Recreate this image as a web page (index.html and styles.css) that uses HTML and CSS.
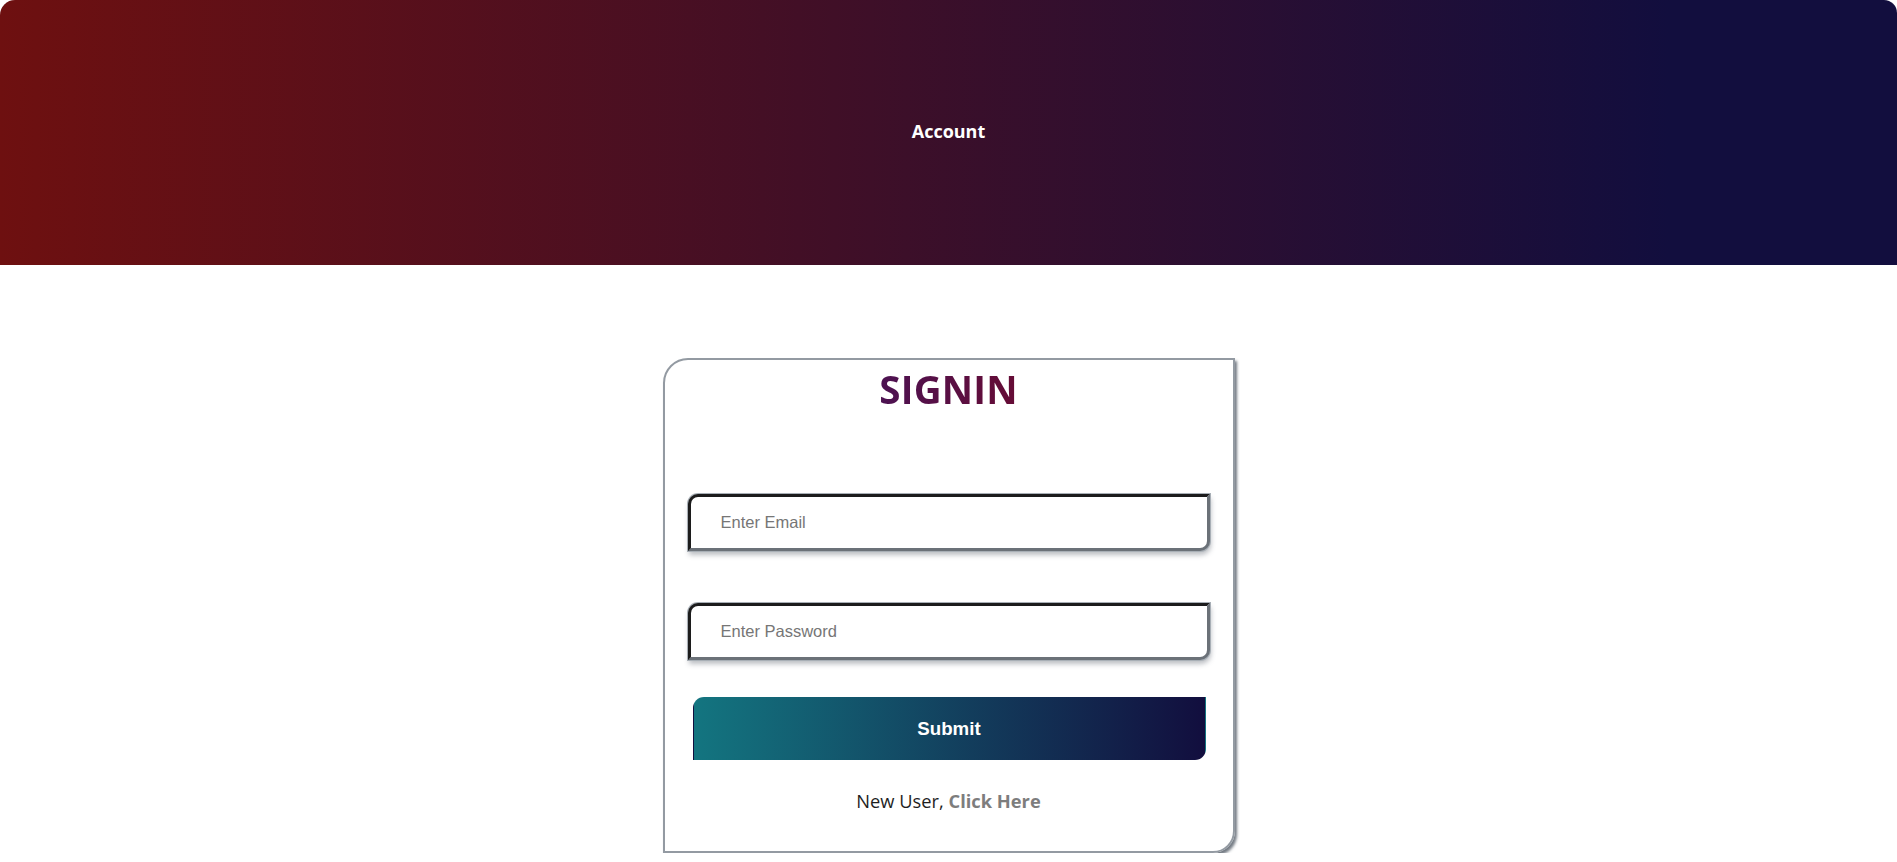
FILE: index.html
```html
<!DOCTYPE html>
<html lang="en">
<head>
<meta charset="utf-8">
<title>Account</title>
<link rel="stylesheet" href="styles.css">
</head>
<body>
<header class="banner">
  <span class="banner-title">Account</span>
</header>
<main class="page">
  <form class="card" onsubmit="return false">
    <h1 class="card-title">SIGNIN</h1>
    <input class="field field-email" type="email" placeholder="Enter Email">
    <input class="field field-password" type="password" placeholder="Enter Password">
    <button class="submit" type="submit">Submit</button>
    <p class="switch">New User, <a class="switch-link" href="#">Click Here</a></p>
  </form>
</main>
</body>
</html>
```

FILE: styles.css
```css
html, body {
  margin: 0;
  padding: 0;
  background: #ffffff;
}

body {
  font-family: "Open Sans", "Noto Sans", sans-serif;
}

.banner {
  height: 265px;
  box-sizing: border-box;
  padding-bottom: 3px;
  display: flex;
  align-items: center;
  justify-content: center;
  background: linear-gradient(to right, #6e1010 0%, #120e3e 88%, #120e3e 100%);
  border-radius: 15px 13px 0 0;
}

.banner-title {
  color: #ffffff;
  font-weight: 700;
  font-size: 18px;
}

.page {
  display: flex;
  justify-content: center;
  padding-top: 93px;
}

.card {
  width: 568px;
  box-sizing: content-box;
  border: 2px solid #939aa2;
  border-radius: 25px 0 22px 0;
  box-shadow: 2px 3px 3px rgba(55, 65, 78, 0.7);
  padding: 5px 0 0 0;
  display: flex;
  flex-direction: column;
  align-items: stretch;
}

.card-title {
  margin: 0;
  text-align: center;
  font-size: 38.5px;
  font-weight: 700;
  line-height: 48px;
  letter-spacing: 0.2px;
  background: linear-gradient(to right, #4c1252, #660c35);
  -webkit-background-clip: text;
  background-clip: text;
  color: transparent;
  align-self: center;
}

.field {
  margin: 0 23px;
  height: 57px;
  box-sizing: border-box;
  border: 3px solid;
  border-color: #1c1c1c #6b7178 #6b7178 #1c1c1c;
  border-radius: 10px 0 10px 0;
  box-shadow: 0 0 0 1px #a8afb6, 1px 4px 5px rgba(60, 70, 82, 0.35);
  padding: 0 0 0 30px;
  font-family: "Liberation Sans", Arial, sans-serif;
  font-size: 16.5px;
  color: #222;
  background: #fff;
  outline: none;
}

.field::placeholder {
  color: #767676;
}

.field-email {
  margin-top: 81px;
}

.field-password {
  margin-top: 52px;
}

.submit {
  margin: 37px 27px 0 28px;
  height: 63px;
  border: 1px solid transparent;
  border-radius: 11px 0 11px 0;
  background: linear-gradient(to right, #137580, #120e3e);
  color: #ffffff;
  font-family: "Liberation Sans", Arial, sans-serif;
  font-weight: 700;
  font-size: 18.7px;
  cursor: pointer;
}

.switch {
  margin: 29px 0 38px 0;
  text-align: center;
  font-size: 18.3px;
  line-height: 24px;
  color: #1e1e1e;
}

.switch-link {
  color: #7d7d7d;
  font-weight: 700;
  text-decoration: none;
}
```
